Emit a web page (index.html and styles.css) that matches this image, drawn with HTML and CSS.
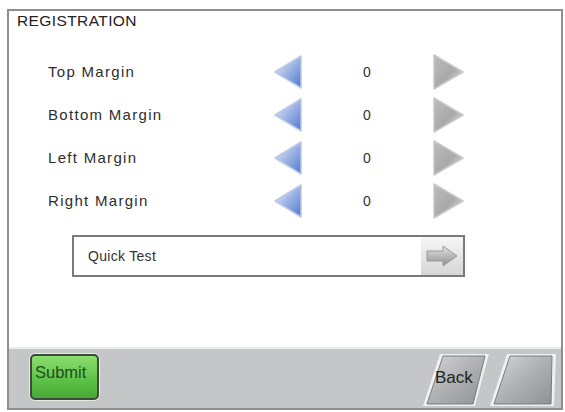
FILE: index.html
```html
<!DOCTYPE html>
<html lang="en">
<head>
<meta charset="utf-8">
<title>Registration</title>
<link rel="stylesheet" href="styles.css">
</head>
<body>
<div class="screen">
  <div class="title">REGISTRATION</div>

  <div class="settings">
    <div class="row">
      <span class="label">Top Margin</span>
      <svg class="arrow" viewBox="0 0 30 36"><use href="#arrow-left"/></svg>
      <span class="value">0</span>
      <svg class="arrow" viewBox="0 0 34 36"><use href="#arrow-right"/></svg>
    </div>
    <div class="row">
      <span class="label">Bottom Margin</span>
      <svg class="arrow" viewBox="0 0 30 36"><use href="#arrow-left"/></svg>
      <span class="value">0</span>
      <svg class="arrow" viewBox="0 0 34 36"><use href="#arrow-right"/></svg>
    </div>
    <div class="row">
      <span class="label">Left Margin</span>
      <svg class="arrow" viewBox="0 0 30 36"><use href="#arrow-left"/></svg>
      <span class="value">0</span>
      <svg class="arrow" viewBox="0 0 34 36"><use href="#arrow-right"/></svg>
    </div>
    <div class="row">
      <span class="label">Right Margin</span>
      <svg class="arrow" viewBox="0 0 30 36"><use href="#arrow-left"/></svg>
      <span class="value">0</span>
      <svg class="arrow" viewBox="0 0 34 36"><use href="#arrow-right"/></svg>
    </div>
  </div>

  <div class="quick">
    <span class="quick-label">Quick Test</span>
    <span class="quick-go">
      <svg viewBox="0 0 34 24" width="34" height="24">
        <defs>
          <linearGradient id="go-fill" x1="0" y1="0" x2="0" y2="1">
            <stop offset="0" stop-color="#e4e4e4"/>
            <stop offset="1" stop-color="#8e8e8e"/>
          </linearGradient>
        </defs>
        <path d="M2 7 H18 V2 L32 12 L18 22 V17 H2 Z" fill="url(#go-fill)" stroke="#9a9a9a" stroke-width="1" stroke-linejoin="round"/>
      </svg>
    </span>
  </div>

  <div class="footer">
    <button class="submit">Submit</button>
    <div class="nav">
      <div class="slant">
        <svg viewBox="0 0 66 52" width="66" height="52">
          <path d="M17 0 H66 L52 52 H0 Z" fill="#eef0f1"/>
          <path d="M20 2 H62 L50 50 H4 Z" fill="url(#nav-fill)" stroke="#7c7c7c" stroke-width="1"/>
        </svg>
        <span class="slant-text">Back</span>
      </div>
      <div class="slant">
        <svg viewBox="0 0 66 52" width="66" height="52">
          <path d="M17 0 H66 L64 52 H0 Z" fill="#eef0f1"/>
          <path d="M20 2 H62 L61 50 H4 Z" fill="url(#nav-fill)" stroke="#7c7c7c" stroke-width="1"/>
        </svg>
      </div>
    </div>
  </div>
</div>

<svg class="defs" width="0" height="0">
  <defs>
    <linearGradient id="blue-fill" x1="0" y1="0" x2="1" y2="1">
      <stop offset="0" stop-color="#eef3fb"/>
      <stop offset="0.5" stop-color="#9db4e4"/>
      <stop offset="1" stop-color="#4e78cf"/>
    </linearGradient>
    <linearGradient id="gray-fill" x1="0" y1="0" x2="1" y2="1">
      <stop offset="0" stop-color="#bdbdbd"/>
      <stop offset="0.55" stop-color="#a9a9a9"/>
      <stop offset="1" stop-color="#e6e6e6"/>
    </linearGradient>
    <linearGradient id="nav-fill" x1="0" y1="0" x2="1" y2="1">
      <stop offset="0" stop-color="#d6d7d8"/>
      <stop offset="0.5" stop-color="#aeb0b2"/>
      <stop offset="1" stop-color="#8f9193"/>
    </linearGradient>
    <g id="arrow-left">
      <path d="M2 18 L28 2 L28 34 Z" fill="url(#blue-fill)" stroke="#b9c8e8" stroke-width="1.5" stroke-linejoin="round"/>
    </g>
    <g id="arrow-right">
      <path d="M32 18 L3 1 L3 35 Z" fill="url(#gray-fill)" stroke="#c8c8c8" stroke-width="1.5" stroke-linejoin="round"/>
    </g>
  </defs>
</svg>
</body>
</html>
```

FILE: styles.css
```css
html, body {
  margin: 0;
  padding: 0;
  background: #ffffff;
}

body {
  width: 565px;
  height: 412px;
  overflow: hidden;
  font-family: "Liberation Sans", Arial, sans-serif;
  color: #2a2a2a;
}

.defs {
  position: absolute;
  width: 0;
  height: 0;
}

.screen {
  margin: 9px 2px 2px 7px;
  border: 2px solid #8e8e8e;
  height: 397px;
  display: flex;
  flex-direction: column;
  background: #ffffff;
}

.title {
  font-size: 15.5px;
  letter-spacing: 0.4px;
  line-height: 18px;
  padding: 1px 0 0 8px;
  color: #222;
}

.settings {
  margin-top: 20px;
  display: flex;
  flex-direction: column;
}

.row {
  display: grid;
  grid-template-columns: 225px 30px 128px 34px;
  align-items: center;
  height: 43px;
  padding-left: 39px;
}

.label {
  font-size: 15px;
  letter-spacing: 1.3px;
  color: #2e2e2e;
}

.arrow {
  width: 30px;
  height: 36px;
  display: block;
}

.row .arrow:last-child {
  width: 34px;
}

.value {
  text-align: center;
  font-size: 14px;
  color: #333;
}

.quick {
  margin: 13px 0 0 63px;
  width: 389px;
  height: 38px;
  border: 2px solid #7a7a7a;
  display: flex;
  align-items: center;
  justify-content: space-between;
}

.quick-label {
  font-size: 14px;
  letter-spacing: 0.3px;
  padding-left: 14px;
  color: #333;
}

.quick-go {
  width: 42px;
  height: 100%;
  display: flex;
  align-items: center;
  justify-content: center;
  background: linear-gradient(#f6f6f6, #d6d6d6);
}

.footer {
  margin-top: auto;
  height: 59px;
  background: #c4c6c8;
  border-top: 2px solid #eceeee;
  display: flex;
  align-items: flex-start;
  justify-content: space-between;
}

.submit {
  margin: 5px 0 0 21px;
  width: 69px;
  height: 46px;
  border: 2px solid #3d4a3c;
  border-radius: 5px;
  background: linear-gradient(#8ade6f, #5cc045 60%, #49a736);
  box-shadow: 0 0 0 1px #e6ece4;
  font-family: "Liberation Sans", Arial, sans-serif;
  font-size: 16.5px;
  color: #214d1c;
  text-align: left;
  padding: 0 0 10px 3px;
  line-height: 20px;
}

.nav {
  display: flex;
  gap: 1px;
  margin: 5px 5px 0 0;
}

.slant {
  position: relative;
  width: 66px;
  height: 52px;
}

.slant svg {
  display: block;
}

.slant-text {
  position: absolute;
  left: 12px;
  top: 14px;
  font-size: 17px;
  color: #222;
}
```
